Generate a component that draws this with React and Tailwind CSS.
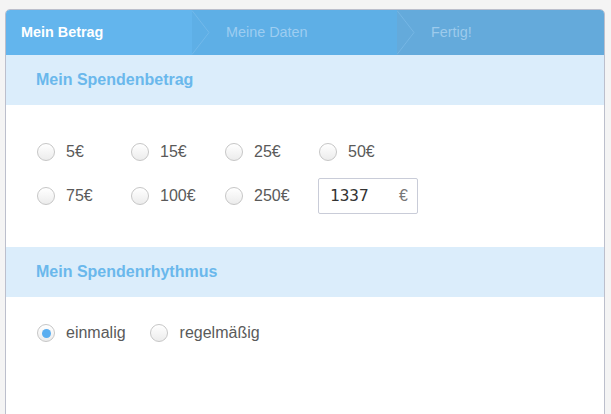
const Radio = ({ checked }) => (
  <span className="relative flex h-[18px] w-[18px] shrink-0 items-center justify-center rounded-full border border-[#c6c6c6] bg-gradient-to-b from-white to-[#ececec] shadow-[inset_0_1px_1px_rgba(255,255,255,0.8)]">
    {checked && <span className="h-[9px] w-[9px] rounded-full bg-[#5aaef0]" />}
  </span>
);

const Chevron = () => (
  <svg
    className="absolute right-[-18px] top-0 z-10 h-full w-[18px]"
    viewBox="0 0 18 44"
    fill="none"
  >
    <path d="M0 0 L17 22 L0 44" stroke="#8cc6ef" strokeWidth="1" opacity="0.45" />
  </svg>
);

const amounts = [
  ["5€", "15€", "25€", "50€"],
  ["75€", "100€", "250€"],
];

export default function App() {
  return (
    <div
      className="min-h-[414px] w-full bg-[#f4f4f4] pl-[5px] pr-[6px] pt-[9px]"
      style={{ fontFamily: '"Liberation Sans", Arial, sans-serif' }}
    >
      <div className="h-[420px] overflow-hidden rounded-t-[5px] border border-[#bcbfcc] bg-white">
        {/* Steps */}
        <div className="flex h-[45px] text-[14.4px]">
          <div className="relative flex w-[186px] items-center bg-[#63b5ed] pl-[15px] font-bold text-white">
            Mein Betrag
            <Chevron />
          </div>
          <div className="relative flex w-[205px] items-center bg-[#5eafe6] pl-[34px] text-[#9dcdf1]">
            Meine Daten
            <Chevron />
          </div>
          <div className="flex flex-1 items-center bg-[#64aadb] pl-[34px] text-[#9dcbec]">
            Fertig!
          </div>
        </div>

        {/* Betrag */}
        <div className="flex h-[50px] items-center bg-[#dbedfb] pl-[30px] text-[16px] font-bold text-[#6ab8ec]">
          Mein Spendenbetrag
        </div>
        <div className="flex flex-col gap-[8px] pb-[33px] pl-[31px] pt-[29px] text-[16px] text-[#5a5a5a]">
          {amounts.map((row, i) => (
            <div key={i} className="flex h-[36px] items-center">
              {row.map((a) => (
                <label key={a} className="flex w-[94px] items-center gap-[11px]">
                  <Radio />
                  <span>{a}</span>
                </label>
              ))}
              {i === 1 && (
                <div className="ml-[-1px] flex h-[36px] w-[100px] items-center justify-between rounded-[2px] border border-[#c9ccd8] pl-[11px] pr-[9px]">
                  <span
                    className="text-[16px] text-[#333]"
                    style={{ fontFamily: '"DejaVu Sans Mono", monospace' }}
                  >
                    1337
                  </span>
                  <span className="text-[#777]">€</span>
                </div>
              )}
            </div>
          ))}
        </div>

        {/* Rhythmus */}
        <div className="flex h-[50px] items-center bg-[#dbedfb] pl-[30px] text-[16px] font-bold text-[#6ab8ec]">
          Mein Spendenrhythmus
        </div>
        <div className="mt-[18px] flex h-[36px] items-center gap-[24px] pl-[31px] text-[16px] text-[#5a5a5a]">
          <label className="flex items-center gap-[11px]">
            <Radio checked />
            <span>einmalig</span>
          </label>
          <label className="flex items-center gap-[12px]">
            <Radio />
            <span>regelmäßig</span>
          </label>
        </div>
      </div>
    </div>
  );
}
